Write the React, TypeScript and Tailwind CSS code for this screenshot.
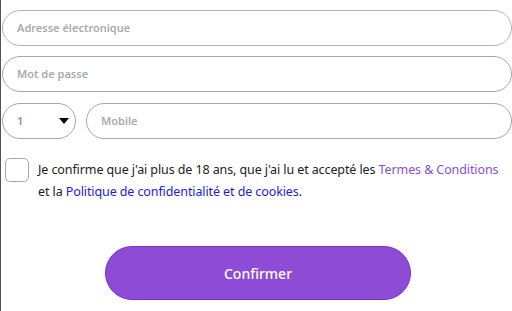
import React from "react";

export default function App() {
  return (
    <div
      className="w-[512px] h-[311px] bg-white border-l border-[#555] overflow-hidden"
      style={{ fontFamily: '"Noto Sans", "Open Sans", sans-serif' }}
    >
      <div className="pl-[1px] pt-[10px] flex flex-col">
        <div className="h-[36px] w-[510px] rounded-full border border-[#b4b4b4] flex items-center pl-[14px] text-[11px] font-semibold text-[#ababab]">
          Adresse électronique
        </div>
        <div className="mt-[10px] h-[36px] w-[510px] rounded-full border border-[#a8a8a8] flex items-center pl-[14px] text-[11px] font-semibold text-[#ababab]">
          Mot de passe
        </div>
        <div className="mt-[11px] flex gap-[10px]">
          <div className="h-[36px] w-[74px] rounded-full border border-[#a8a8a8] flex items-center justify-between pl-[14px] pr-[6px] text-[11px] font-semibold text-[#b08a70]">
            <span>1</span>
            <svg width="10" height="6" viewBox="0 0 10 6">
              <path d="M0 0 L10 0 L5 6 Z" fill="#000" />
            </svg>
          </div>
          <div className="h-[36px] w-[426px] rounded-full border border-[#a8a8a8] flex items-center pl-[14px] text-[11px] font-semibold text-[#ababab]">
            Mobile
          </div>
        </div>
        <div className="mt-[18px] flex items-start gap-[9px]">
          <div className="ml-[3px] mt-[1px] w-[24px] h-[24px] rounded-[5px] border border-[#a8a8a8] shrink-0" />
          <p className="pt-[2px] text-[12.5px] leading-[22px] text-[#222] tracking-[-0.1px] whitespace-nowrap">
            Je confirme que j'ai plus de 18 ans, que j'ai lu et accepté les{" "}
            <span className="text-[#8a4fd8]">Termes &amp; Conditions</span>
            <br />
            et la{" "}
            <span className="text-[#1a1ae6]">Politique de confidentialité et de cookies</span>.
          </p>
        </div>
        <div className="mt-[43px] flex pl-[103px]">
          <button className="h-[54px] w-[306px] rounded-full bg-[#8d4bd6] border border-[#7a30d0] text-white text-[14px] font-medium">
            Confirmer
          </button>
        </div>
      </div>
    </div>
  );
}
